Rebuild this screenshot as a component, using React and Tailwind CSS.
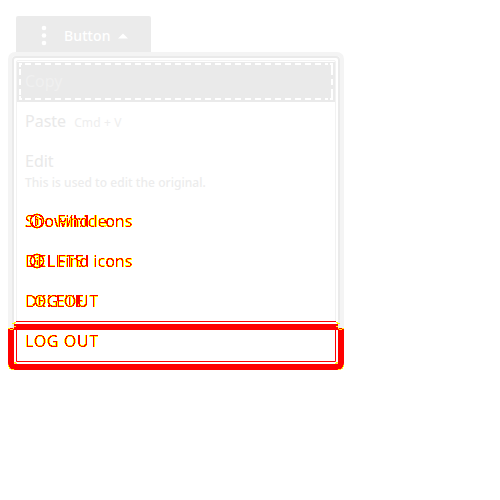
import React from "react";

const label = "absolute top-0 left-0 whitespace-pre leading-6 text-[16px] text-black";

function Edge({ children }) {
  return <div className="absolute inset-0 [filter:url(#edge)]">{children}</div>;
}

function InfoIcon() {
  return (
    <svg className="absolute left-[4px] top-[4px]" width="16" height="16" viewBox="0 0 16 16" fill="none" stroke="#000" strokeWidth="1.5">
      <circle cx="8" cy="8" r="6.5" />
      <path d="M8.5 7v5M8.5 4v1.5" />
    </svg>
  );
}

function FindIcons() {
  return (
    <Edge>
      <InfoIcon />
      <span className={label + " pl-8"}>Find icons</span>
    </Edge>
  );
}

function Words({ children, wide }) {
  return (
    <Edge>
      <span className={label + (wide ? " tracking-[0.6px]" : " tracking-[0.3px]")}>{children}</span>
    </Edge>
  );
}

export default function App() {
  return (
    <div className="h-[500px] w-[500px] overflow-hidden bg-white pl-2 pt-4 font-['Noto_Sans',sans-serif]">
      <svg className="absolute h-0 w-0">
        <filter id="edge" x="-10%" y="-10%" width="120%" height="120%" colorInterpolationFilters="sRGB">
          <feColorMatrix values="0 0 0 0 1  0 0 0 1 0  0 0 0 0 0  0 0 0 1 0" />
          <feComponentTransfer>
            <feFuncG type="discrete" tableValues="1 1 1 1 1 1 0 0 0 0" />
            <feFuncA type="discrete" tableValues="0 1 1 1 1 1 1 1 1 1 1 1 1 1 1 1" />
          </feComponentTransfer>
        </filter>
      </svg>
      <div className="ml-2 flex h-9 w-[135px] items-center rounded-t-[2px] bg-[#ebebeb] pb-px pt-1 text-[14px] font-medium text-white">
        <svg className="ml-[24px]" width="8" height="22" fill="white">
          <circle cx="4" cy="3" r="2.3" />
          <circle cx="4" cy="10.5" r="2.3" />
          <circle cx="4" cy="18" r="2.3" />
        </svg>
        <span className="ml-4 w-[48px] tracking-[0.1px]">Button</span>
        <svg className="ml-[6px]" width="10" height="6" fill="white"><path d="M0 5.5L5 .5l5 5z" /></svg>
      </div>
      <div className="relative h-[318px] w-[336px] rounded-[7px] border-4 border-[#f4f4f4]">
        <div className="h-full rounded-[4px] border-2 border-[#eaeaea] p-[2px]">
          <div className="h-full rounded-[2px] border border-[#f2f2f2] pt-px text-[16px] leading-6 text-[#e9e9e9]">
            <div className="relative h-10 bg-[#eaeaea] pl-2 pt-[7px] text-[#f0f0f0]">
              Copy
              <svg className="absolute left-[2px] top-[1px]" width="314" height="37" fill="none" stroke="white" strokeWidth="2">
                <path d="M6 1H309M6 36H309" strokeDasharray="6 4" />
                <path d="M1 6V34M313 6V34" strokeDasharray="6 4" />
                <path d="M1 4V1H3M311 1H313V6M1 33V36H3M311 36H313V31" />
              </svg>
            </div>
            <div className="flex h-10 items-baseline pl-2 pt-[7px]">
              Paste<span className="ml-2 text-[12px] tracking-[0.15px] text-[#eeeeee]">Cmd + V</span>
            </div>
            <div className="h-[60px] pl-2 pt-[7px]">
              Edit
              <div className="text-[12px] font-medium leading-5 tracking-[0.05px] text-[#ececec]">This is used to edit the original.</div>
            </div>
            <div className="pl-2 pt-[7px]">
              <div className="relative h-10"><Words>Show/hide</Words><FindIcons /></div>
              <div className="relative h-10"><Words wide>DELETE</Words><FindIcons /></div>
              <div className="relative h-10"><Words wide>DELETE</Words><Words wide>LOG OUT</Words></div>
              <div className="relative h-8"><Words wide>LOG OUT</Words></div>
            </div>
          </div>
        </div>
        <div className="absolute -left-1 top-[265px] h-[49px] w-[336px]">
          <svg width="336" height="49" fill="none" stroke="#f00">
            <path d="M8 0H328V3H8z" fill="#fff" stroke="none" />
            <path d="M8 .5H328" />
            <path d="M6 3H330V9H6z" fill="#f00" stroke="none" />
            <path d="M3 7V42Q3 46 7 46H329Q333 46 333 42V7" strokeWidth="6" />
            <path d="M8.5 9V40.5H327.5V9" />
            <path d="M0 7.5h2M2 8.5h3M5 7.5h1M6 5.5h2M4 2.5h3M6 1.5h2M336 7.5h-2M334 8.5h-3M331 7.5h-1M330 5.5h-2M332 2.5h-3M330 1.5h-2M.5 44v2M1.5 46v2M3 48.5h3M335.5 44v2M334.5 46v2M333 48.5h-3M6 41.5h2M7 42.5h2M330 41.5h-2M329 42.5h-2" stroke="#ff0" />
          </svg>
        </div>
      </div>
    </div>
  );
}
